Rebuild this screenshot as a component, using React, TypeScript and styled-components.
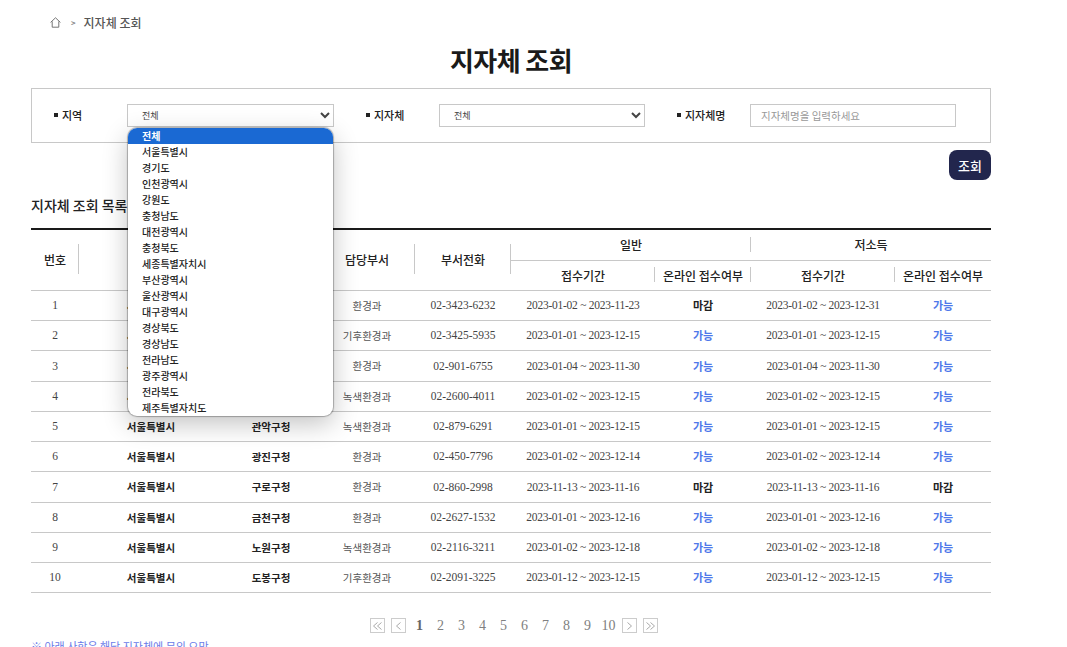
import React from "react";
import styled, { createGlobalStyle } from "styled-components";

const Global = createGlobalStyle`
  html, body { margin: 0; padding: 0; background: #fff; overflow: hidden; height: 647px; }
  body { font-family: "Liberation Serif", "Noto Sans CJK KR", serif; color: #222; }
  * { box-sizing: border-box; }
`;
const Page = styled.div`
  width: 960px;
  margin-left: 31px;
`;
const Crumbs = styled.nav`
  height: 44px;
  display: flex;
  align-items: center;
  padding-left: 19px;
  font: 500 12px "Noto Sans CJK KR", sans-serif;
  color: #555;
  svg { display: block; }
`;
const CrumbSep = styled.span`
  margin: 0 8px 0 10px;
  font-size: 8px;
  color: #777;
`;
const Title = styled.h1`
  margin: 0;
  height: 44px;
  text-align: center;
  font: 700 26px/32px "Noto Sans CJK KR", sans-serif;
  letter-spacing: -0.6px;
  color: #1a1a1a;
`;
const Filter = styled.div`
  position: relative;
  height: 55px;
  border: 1px solid #c8c8c8;
  display: flex;
  align-items: flex-start;
  padding-top: 15px;
`;
const FieldLabel = styled.label<{ $w: number; $pad: number }>`
  width: ${(p) => p.$w}px;
  flex: none;
  padding-left: ${(p) => p.$pad}px;
  display: flex;
  align-items: center;
  gap: 4px;
  height: 22px;
  font: 500 11px "Noto Sans CJK KR", sans-serif;
  color: #222;
  &::before { content: ""; width: 4px; height: 4px; background: #222; }
`;
const Select = styled.select<{ $w: number }>`
  width: ${(p) => p.$w}px;
  flex: none;
  height: 23px;
  border: 1px solid #c8c8c8;
  background: #fff;
  padding-left: 10px;
  font: 400 9px "Noto Sans CJK KR", sans-serif;
  color: #444;
  border-radius: 0;
`;
const TextInput = styled.input`
  width: 206px;
  height: 23px;
  border: 1px solid #c8c8c8;
  padding: 0 10px;
  font: 400 10.5px "Noto Sans CJK KR", sans-serif;
  &::placeholder { color: #999; }
`;
const Menu = styled.ul`
  position: absolute;
  left: 96px;
  top: 39px;
  width: 205px;
  margin: 0;
  padding: 0;
  list-style: none;
  background: #fff;
  border-radius: 9px;
  overflow: hidden;
  box-shadow: 0 0 1px 1px rgba(0,0,0,.28), 0 8px 26px rgba(0,0,0,.24);
  z-index: 5;
`;
const MenuItem = styled.li<{ $active?: boolean }>`
  height: 16px;
  padding-left: 14px;
  font: 500 10px/16px "Noto Sans CJK KR", sans-serif;
  white-space: nowrap;
  color: ${(p) => (p.$active ? "#fff" : "#222")};
  background: ${(p) => (p.$active ? "#1a69d3" : "transparent")};
  font-weight: ${(p) => (p.$active ? 700 : 500)};
`;
const ButtonRow = styled.div`
  display: flex;
  justify-content: flex-end;
  margin-top: 7px;
`;
const SearchButton = styled.button`
  width: 42px;
  height: 30px;
  border: 0;
  border-radius: 8px;
  background: #22264d;
  color: #fff;
  font: 500 13px "Noto Sans CJK KR", sans-serif;
  padding: 0;
`;
const SectionTitle = styled.h2`
  margin: 15px 0 0;
  height: 33px;
  font: 500 14px/20px "Noto Sans CJK KR", sans-serif;
  color: #222;
`;
const Table = styled.table`
  width: 960px;
  border-collapse: collapse;
  table-layout: fixed;
  border-top: 2px solid #1a1a1a;
`;
const Th = styled.th<{ $first?: boolean; $h?: number }>`
  position: relative;
  height: ${(p) => p.$h ?? 30}px;
  padding: 0;
  font: 500 12px "Noto Sans CJK KR", sans-serif;
  color: #222;
  border-bottom: 1px solid #c8c8c8;
  &::before {
    content: ${(p) => (p.$first ? "none" : '""')};
    position: absolute;
    left: -1px;
    top: 50%;
    height: 15px;
    margin-top: -8px;
    border-left: 1px solid #c8c8c8;
  }
`;
const TallTh = styled(Th)<{ $end?: boolean }>`
  &::before { height: 30px; margin-top: -16px; }
  &::after {
    content: ${(p) => (p.$end ? '""' : "none")};
    position: absolute;
    right: 0;
    top: 50%;
    height: 30px;
    margin-top: -16px;
    border-left: 1px solid #c8c8c8;
  }
`;
const Tr = styled.tr<{ $h: number }>`
  height: ${(p) => p.$h}px;
`;
const Td = styled.td<{ $kind?: "strong" | "open" | "closed" }>`
  padding: 0;
  text-align: center;
  border-bottom: 1px solid #c8c8c8;
  font-size: 11.5px;
  color: #444;
  ${(p) => p.$kind === "strong" && `font: 700 10.5px "Noto Sans CJK KR", sans-serif; color: #222;`}
  ${(p) => p.$kind === "open" && `font: 700 11px "Noto Sans CJK KR", sans-serif; color: #4f78ea;`}
  ${(p) => p.$kind === "closed" && `font: 700 11px "Noto Sans CJK KR", sans-serif; color: #222;`}
`;
const DateRange = styled.span`
  letter-spacing: -0.25px;
`;
const Dept = styled.span`
  font: 400 10.5px "Noto Sans CJK KR", sans-serif;
  color: #555;
`;
const Pager = styled.div`
  margin-top: 25px;
  height: 16px;
  display: flex;
  align-items: center;
  justify-content: center;
  padding-left: 6px;
`;
const PageBox = styled.span`
  width: 15px;
  height: 15px;
  border: 1px solid #ccc;
  display: flex;
  align-items: center;
  justify-content: center;
  margin: 0 3px;
  svg { display: block; }
`;
const PageNum = styled.span<{ $on?: boolean }>`
  width: 21px;
  text-align: center;
  font-size: 14px;
  font-weight: ${(p) => (p.$on ? 700 : 400)};
  color: ${(p) => (p.$on ? "#666" : "#808080")};
`;
const Note = styled.p`
  margin: 4px 0 0;
  font: 400 11px "Noto Sans CJK KR", sans-serif;
  color: #6a7be8;
`;

const regions = ["전체","서울특별시","경기도","인천광역시","강원도","충청남도","대전광역시","충청북도","세종특별자치시","부산광역시","울산광역시","대구광역시","경상북도","경상남도","전라남도","광주광역시","전라북도","제주특별자치도"];
type Row = [string, string, string, string, string, string, string, string, string];
const rows: Row[] = [
  ["서울특별시","강남구청","환경과","02-3423-6232","2023-01-02 ~ 2023-11-23","마감","2023-01-02 ~ 2023-12-31","가능","30"],
  ["서울특별시","강동구청","기후환경과","02-3425-5935","2023-01-01 ~ 2023-12-15","가능","2023-01-01 ~ 2023-12-15","가능","30"],
  ["서울특별시","강북구청","환경과","02-901-6755","2023-01-04 ~ 2023-11-30","가능","2023-01-04 ~ 2023-11-30","가능","31"],
  ["서울특별시","강서구청","녹색환경과","02-2600-4011","2023-01-02 ~ 2023-12-15","가능","2023-01-02 ~ 2023-12-15","가능","30"],
  ["서울특별시","관악구청","녹색환경과","02-879-6291","2023-01-01 ~ 2023-12-15","가능","2023-01-01 ~ 2023-12-15","가능","30"],
  ["서울특별시","광진구청","환경과","02-450-7796","2023-01-02 ~ 2023-12-14","가능","2023-01-02 ~ 2023-12-14","가능","30"],
  ["서울특별시","구로구청","환경과","02-860-2998","2023-11-13 ~ 2023-11-16","마감","2023-11-13 ~ 2023-11-16","마감","31"],
  ["서울특별시","금천구청","환경과","02-2627-1532","2023-01-01 ~ 2023-12-16","가능","2023-01-01 ~ 2023-12-16","가능","30"],
  ["서울특별시","노원구청","녹색환경과","02-2116-3211","2023-01-02 ~ 2023-12-18","가능","2023-01-02 ~ 2023-12-18","가능","30"],
  ["서울특별시","도봉구청","기후환경과","02-2091-3225","2023-01-12 ~ 2023-12-15","가능","2023-01-12 ~ 2023-12-15","가능","30"],
];
const widths = [48, 144, 96, 96, 96, 144, 96, 144, 96];

const HomeIcon = () => (
  <svg width="11" height="11" viewBox="0 0 11 11" fill="none" stroke="#666" strokeWidth="0.9">
    <path d="M0.6 5.4 5.5 0.8l4.9 4.6M2.2 4.4v5.8h6.6V4.4" />
  </svg>
);
const Chev = ({ dir, double }: { dir: "l" | "r"; double?: boolean }) => {
  const s = dir === "l" ? 1 : -1;
  const line = (x: number) => `M${x + s * 2} 1.5 ${x - s * 2} 5l${s * 4} 3.5`;
  return (
    <svg width="11" height="10" viewBox="0 0 11 10" fill="none" stroke="#aaa" strokeWidth="1">
      {double ? <path d={`${line(3.5)}${line(7.5)}`} /> : <path d={line(5.5)} />}
    </svg>
  );
};
const status = (v: string) => (v === "가능" ? "open" : "closed");

export default function App() {
  return (
    <Page>
      <Global />
      <Crumbs>
        <HomeIcon />
        <CrumbSep>&gt;</CrumbSep>
        지자체 조회
      </Crumbs>
      <Title>지자체 조회</Title>
      <Filter>
        <FieldLabel $w={95} $pad={22}>지역</FieldLabel>
        <Select $w={207} defaultValue="전체"><option>전체</option></Select>
        <FieldLabel $w={105} $pad={32}>지자체</FieldLabel>
        <Select $w={206} defaultValue="전체"><option>전체</option></Select>
        <FieldLabel $w={105} $pad={32}>지자체명</FieldLabel>
        <TextInput placeholder="지자체명을 입력하세요" />
        <Menu>
          {regions.map((r, i) => <MenuItem key={r} $active={i === 0}>{r}</MenuItem>)}
        </Menu>
      </Filter>
      <ButtonRow><SearchButton>조회</SearchButton></ButtonRow>
      <SectionTitle>지자체 조회 목록</SectionTitle>
      <Table>
        <colgroup>{widths.map((w, i) => <col key={i} style={{ width: w }} />)}</colgroup>
        <thead>
          <tr>
            <TallTh $first rowSpan={2}>번호</TallTh>
            <TallTh rowSpan={2}>지역</TallTh>
            <TallTh rowSpan={2}>지자체</TallTh>
            <TallTh rowSpan={2}>담당부서</TallTh>
            <TallTh rowSpan={2} $end>부서전화</TallTh>
            <Th colSpan={2} $h={31} $first>일반</Th>
            <Th colSpan={2} $h={31}>저소득</Th>
          </tr>
          <tr>
            <Th $first>접수기간</Th><Th>온라인 접수여부</Th><Th>접수기간</Th><Th>온라인 접수여부</Th>
          </tr>
        </thead>
        <tbody>
          {rows.map((r, i) => (
            <Tr key={i} $h={Number(r[8])}>
              <Td>{i + 1}</Td>
              <Td $kind="strong">{r[0]}</Td>
              <Td $kind="strong">{r[1]}</Td>
              <Td><Dept>{r[2]}</Dept></Td>
              <Td>{r[3]}</Td>
              <Td><DateRange>{r[4]}</DateRange></Td>
              <Td $kind={status(r[5])}>{r[5]}</Td>
              <Td><DateRange>{r[6]}</DateRange></Td>
              <Td $kind={status(r[7])}>{r[7]}</Td>
            </Tr>
          ))}
        </tbody>
      </Table>
      <Pager>
        <PageBox><Chev dir="l" double /></PageBox>
        <PageBox><Chev dir="l" /></PageBox>
        {[1,2,3,4,5,6,7,8,9,10].map((n) => <PageNum key={n} $on={n === 1}>{n}</PageNum>)}
        <PageBox><Chev dir="r" /></PageBox>
        <PageBox><Chev dir="r" double /></PageBox>
      </Pager>
      <Note>※ 아래 사항은 해당 지자체에 문의 요망</Note>
    </Page>
  );
}
